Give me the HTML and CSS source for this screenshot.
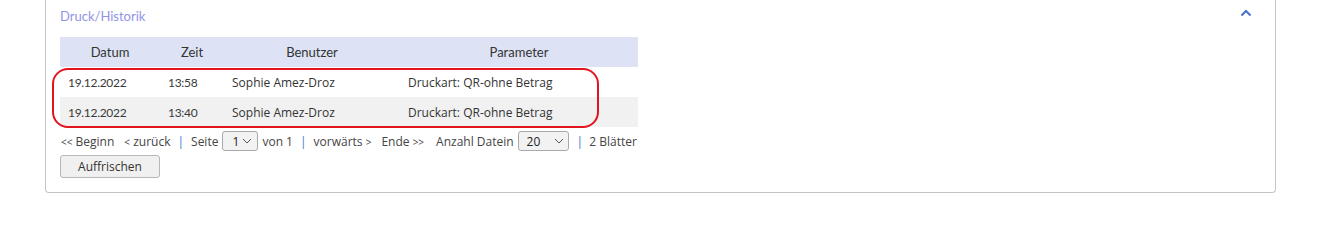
FILE: index.html
```html
<!DOCTYPE html>
<html lang="de">
<head>
<meta charset="utf-8">
<title>Druck/Historik</title>
<link rel="stylesheet" href="styles.css">
</head>
<body>
<div class="panel">
  <div class="panel-head">
    <span class="title">Druck/Historik</span>
    <svg class="chev" width="12" height="8" viewBox="0 0 12 8"><path d="M1.5 6.5 L6 2 L10.5 6.5" fill="none" stroke="#4a6fd3" stroke-width="2"/></svg>
  </div>
  <div class="table-wrap">
    <table class="grid">
      <colgroup><col class="c1"><col class="c2"><col class="c3"><col class="c4"></colgroup>
      <thead>
        <tr><th>Datum</th><th>Zeit</th><th>Benutzer</th><th>Parameter</th></tr>
      </thead>
      <tbody>
        <tr><td>19.12.2022</td><td>13:58</td><td>Sophie Amez-Droz</td><td>Druckart: QR-ohne Betrag</td></tr>
        <tr class="alt"><td>19.12.2022</td><td>13:40</td><td>Sophie Amez-Droz</td><td>Druckart: QR-ohne Betrag</td></tr>
      </tbody>
    </table>
    <div class="mark"></div>
  </div>
  <div class="pager">
    <span class="lnk"><span class="arr">&lt;&lt;</span> Beginn</span>
    <span class="lnk g12"><span class="arr">&lt;</span> zurück</span>
    <span class="sep">|</span>
    <span class="lnk">Seite</span>
    <span class="sel s1"><span>1</span><svg width="10" height="6" viewBox="0 0 10 6"><path d="M1 1 L5 5 L9 1" fill="none" stroke="#555" stroke-width="1"/></svg></span>
    <span class="lnk">von 1</span>
    <span class="sep">|</span>
    <span class="lnk">vorwärts <span class="arr">&gt;</span></span>
    <span class="lnk g11">Ende <span class="arr">&gt;&gt;</span></span>
    <span class="lnk g13">Anzahl Datein</span>
    <span class="sel s2"><span>20</span><svg width="10" height="6" viewBox="0 0 10 6"><path d="M1 1 L5 5 L9 1" fill="none" stroke="#555" stroke-width="1"/></svg></span>
    <span class="sep last">|</span>
    <span class="lnk">2 Blätter</span>
  </div>
  <button class="btn">Auffrischen</button>
</div>
</body>
</html>
```

FILE: styles.css
```css
html, body {
  margin: 0;
  padding: 0;
  background: #fff;
}
body {
  font-family: "Open Sans", "Noto Sans", sans-serif;
  color: #333;
}
.panel {
  margin-left: 45px;
  width: 1201px;
  border: 1px solid #c4c4c4;
  border-top: none;
  border-radius: 0 0 4px 4px;
  padding: 0 14px 14px 14px;
  box-sizing: content-box;
}
.panel-head {
  display: flex;
  justify-content: space-between;
  align-items: center;
  height: 37px;
}
.title {
  font-family: "Lato", "Noto Sans", sans-serif;
  font-size: 13px;
  color: #9094e6;
  margin-top: -5px;
}
.chev {
  margin-right: 9px;
  margin-top: -11px;
}
.table-wrap {
  position: relative;
  width: 578px;
}
.grid {
  border-collapse: collapse;
  width: 578px;
  table-layout: fixed;
}
.c1 { width: 100px; }
.c2 { width: 64px; }
.c3 { width: 176px; }
.c4 { width: 238px; }
.grid th {
  background: #dde3f5;
  height: 30px;
  padding: 0;
  font-family: "Lato", "Noto Sans", sans-serif;
  font-weight: 400;
  font-size: 13px;
  color: #333;
  text-align: center;
}
.grid td {
  height: 30px;
  padding: 0 0 0 8px;
  font-size: 12px;
  color: #333;
  white-space: nowrap;
}
.grid td:first-child, .grid td:nth-child(2) {
  font-family: "Lato", "Noto Sans", sans-serif;
  font-size: 12px;
  letter-spacing: -0.3px;
  color: #3a3a3a;
}
.grid tr.alt td {
  background: #f1f1f1;
}
.mark {
  position: absolute;
  left: -8px;
  top: 31px;
  width: 543px;
  height: 56px;
  border: 2px solid #e3141d;
  border-radius: 16px;
  pointer-events: none;
}
.pager {
  display: flex;
  align-items: center;
  height: 20px;
  margin-top: 4px;
  font-size: 12px;
  color: #444;
  white-space: nowrap;
}
.pager .lnk:first-child { margin-left: 1px; }
.lnk.g12 { margin-left: 10px; }
.lnk.g11 { margin-left: 10px; }
.lnk.g13 { margin-left: 12px; }
.arr {
  font-size: 10px;
  color: #444;
}
.sep {
  color: #3d7bc6;
  margin: 0 7px;
}
.sep.last {
  margin-left: 4px;
  margin-right: 6px;
}
.sel {
  display: inline-flex;
  align-items: center;
  justify-content: space-between;
  box-sizing: border-box;
  height: 20px;
  border: 1px solid #a9a9a9;
  border-radius: 3px;
  background: #f2f2f2;
  font-size: 12px;
  color: #222;
  margin: 0 4px;
}
.sel.s1 {
  width: 36px;
  padding: 0 5px 0 9px;
}
.sel.s2 {
  width: 51px;
  padding: 0 4px 0 8px;
}
.btn {
  display: block;
  margin-top: 4px;
  width: 100px;
  height: 23px;
  border: 1px solid #b7b7b7;
  border-radius: 3px;
  background: #f0f0f0;
  font-family: "Open Sans", "Noto Sans", sans-serif;
  font-size: 12px;
  color: #333;
  padding: 0;
}
```
